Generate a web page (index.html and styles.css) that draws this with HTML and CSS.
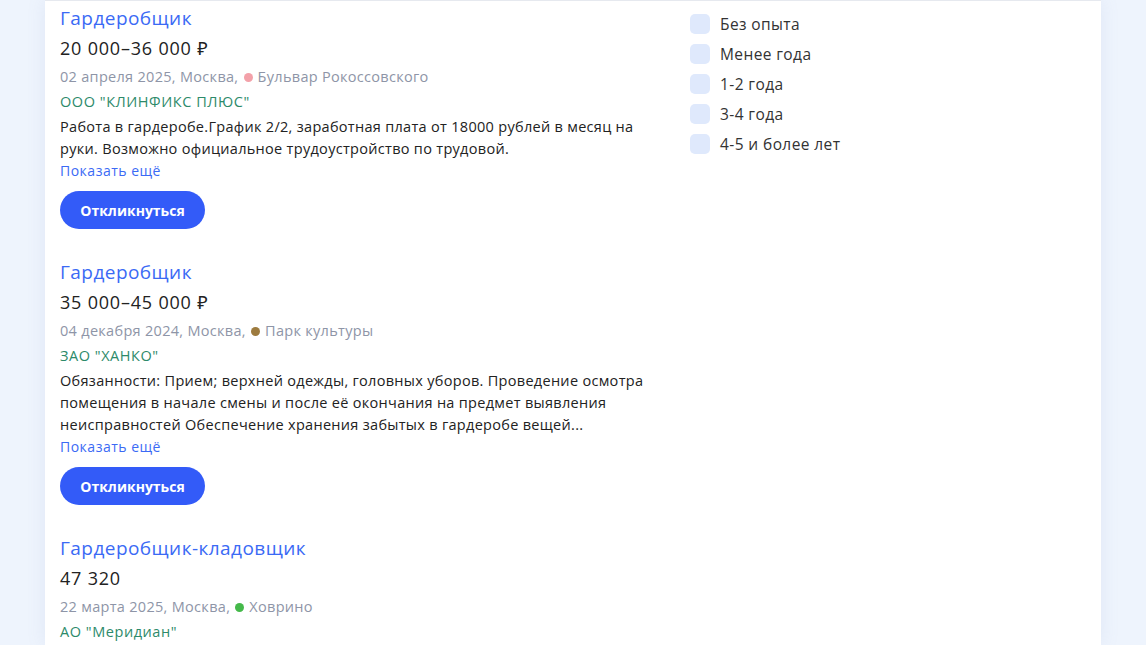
FILE: index.html
```html
<!DOCTYPE html>
<html lang="ru">
<head>
<meta charset="utf-8">
<title>Вакансии</title>
<link rel="stylesheet" href="styles.css">
</head>
<body>
<div class="card">
  <div class="list">
    <div class="vacancy">
      <a class="title" href="#">Гардеробщик</a>
      <div class="salary">20 000–36 000 ₽</div>
      <div class="meta">02 апреля 2025, Москва, <span class="dot pink"></span> Бульвар Рокоссовского</div>
      <div class="company">ООО "КЛИНФИКС ПЛЮС"</div>
      <p class="desc">Работа в гардеробе.График 2/2, заработная плата от 18000 рублей в месяц на руки. Возможно официальное трудоустройство по трудовой.</p>
      <a class="more" href="#">Показать ещё</a>
      <button class="btn">Откликнуться</button>
    </div>
    <div class="vacancy">
      <a class="title" href="#">Гардеробщик</a>
      <div class="salary">35 000–45 000 ₽</div>
      <div class="meta">04 декабря 2024, Москва, <span class="dot brown"></span> Парк культуры</div>
      <div class="company">ЗАО "ХАНКО"</div>
      <p class="desc">Обязанности: Прием; верхней одежды, головных уборов. Проведение осмотра помещения в начале смены и после её окончания на предмет выявления неисправностей Обеспечение хранения забытых в гардеробе вещей...</p>
      <a class="more" href="#">Показать ещё</a>
      <button class="btn">Откликнуться</button>
    </div>
    <div class="vacancy">
      <a class="title" href="#">Гардеробщик-кладовщик</a>
      <div class="salary">47 320</div>
      <div class="meta">22 марта 2025, Москва, <span class="dot green"></span> Ховрино</div>
      <div class="company">АО "Меридиан"</div>
    </div>
  </div>
  <div class="filters">
    <label class="check"><span class="box"></span>Без опыта</label>
    <label class="check"><span class="box"></span>Менее года</label>
    <label class="check"><span class="box"></span>1-2 года</label>
    <label class="check"><span class="box"></span>3-4 года</label>
    <label class="check"><span class="box"></span>4-5 и более лет</label>
  </div>
</div>
</body>
</html>
```
FILE: styles.css
```css
* { box-sizing: border-box; }
html, body { margin: 0; padding: 0; }
body {
  background: #eef4fd;
  font-family: "Open Sans", "Noto Sans", sans-serif;
  color: #222;
  height: 645px;
  overflow: hidden;
}
.card {
  margin-left: 45px;
  width: 1056px;
  min-height: 645px;
  background: #fff;
  border-top: 1px solid #e6e9ef;
  box-shadow: 0 0 18px rgba(120, 140, 190, 0.12);
  display: grid;
  grid-template-columns: 630px 1fr;
  padding: 4px 0 0 15px;
}
.list { display: flex; flex-direction: column; gap: 30px; width: 600px; }
.vacancy { display: flex; flex-direction: column; align-items: flex-start; }
.title {
  color: #3b6af5;
  text-decoration: none;
  font-size: 19px;
  line-height: 26px;
  letter-spacing: 0.45px;
}
.salary { font-size: 18px; line-height: 26px; margin-top: 4px; color: #222; letter-spacing: 0.8px; }
.meta { font-size: 14.5px; line-height: 22px; margin-top: 5px; color: #8e95a7; display: flex; align-items: center; white-space: pre; letter-spacing: 0.3px; }
.dot { width: 9px; height: 9px; border-radius: 50%; display: inline-block; margin: 0 1px 0 1px; }
.pink { background: #f3a1a9; }
.brown { background: #9d7b3f; }
.green { background: #45b94a; }
.company { font-size: 14.5px; line-height: 22px; margin-top: 3px; color: #2d8a6a; letter-spacing: 0.55px; }
.desc { font-size: 14.5px; line-height: 22px; margin: 3px 0 0; color: #222; letter-spacing: 0.3px; }
.more { font-size: 14px; line-height: 22px; color: #3b6af5; text-decoration: none; letter-spacing: 0.5px; }
.btn {
  margin-top: 9px;
  width: 145px;
  height: 38px;
  border: none;
  border-radius: 19px;
  background: #335bf8;
  color: #fff;
  font-family: "Open Sans", sans-serif;
  font-weight: 700;
  font-size: 14px;
}
.filters { display: flex; flex-direction: column; gap: 10px; padding-top: 9px; }
.check { display: flex; align-items: center; gap: 10px; font-size: 15.5px; line-height: 20px; color: #333; letter-spacing: 0.4px; }
.box { width: 20px; height: 20px; border-radius: 5px; background: #dfe9fc; }
```
